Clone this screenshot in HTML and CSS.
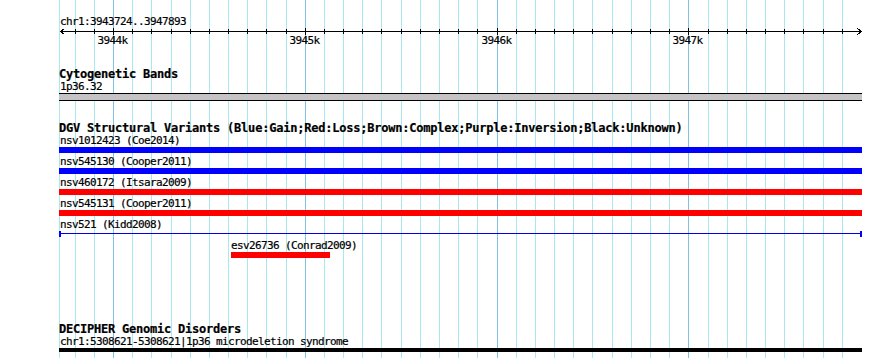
FILE: index.html
```html
<!DOCTYPE html>
<html>
<head>
<meta charset="utf-8">
<title>Genome browser tracks</title>
<link rel="stylesheet" href="styles.css">
</head>
<body>
<div class="panel">
  <svg class="grid" width="890" height="358" viewBox="0 0 890 358" shape-rendering="crispEdges">
    <g class="minor">
      <rect x="59" y="0" width="1" height="358"/>
      <rect x="75" y="0" width="1" height="358"/>
      <rect x="94" y="0" width="1" height="358"/>
      <rect x="132" y="0" width="1" height="358"/>
      <rect x="151" y="0" width="1" height="358"/>
      <rect x="171" y="0" width="1" height="358"/>
      <rect x="190" y="0" width="1" height="358"/>
      <rect x="209" y="0" width="1" height="358"/>
      <rect x="228" y="0" width="1" height="358"/>
      <rect x="247" y="0" width="1" height="358"/>
      <rect x="266" y="0" width="1" height="358"/>
      <rect x="286" y="0" width="1" height="358"/>
      <rect x="324" y="0" width="1" height="358"/>
      <rect x="343" y="0" width="1" height="358"/>
      <rect x="362" y="0" width="1" height="358"/>
      <rect x="381" y="0" width="1" height="358"/>
      <rect x="401" y="0" width="1" height="358"/>
      <rect x="420" y="0" width="1" height="358"/>
      <rect x="439" y="0" width="1" height="358"/>
      <rect x="458" y="0" width="1" height="358"/>
      <rect x="477" y="0" width="1" height="358"/>
      <rect x="516" y="0" width="1" height="358"/>
      <rect x="535" y="0" width="1" height="358"/>
      <rect x="554" y="0" width="1" height="358"/>
      <rect x="573" y="0" width="1" height="358"/>
      <rect x="592" y="0" width="1" height="358"/>
      <rect x="612" y="0" width="1" height="358"/>
      <rect x="631" y="0" width="1" height="358"/>
      <rect x="650" y="0" width="1" height="358"/>
      <rect x="669" y="0" width="1" height="358"/>
      <rect x="708" y="0" width="1" height="358"/>
      <rect x="727" y="0" width="1" height="358"/>
      <rect x="746" y="0" width="1" height="358"/>
      <rect x="765" y="0" width="1" height="358"/>
      <rect x="784" y="0" width="1" height="358"/>
      <rect x="803" y="0" width="1" height="358"/>
      <rect x="823" y="0" width="1" height="358"/>
      <rect x="842" y="0" width="1" height="358"/>
    </g>
    <g class="major">
      <rect x="113" y="0" width="1" height="358"/>
      <rect x="305" y="0" width="1" height="358"/>
      <rect x="497" y="0" width="1" height="358"/>
      <rect x="688" y="0" width="1" height="358"/>
    </g>
  </svg>

  <div class="track track-ruler">
    <div class="label">chr1:3943724..3947893</div>
    <svg class="ruler" width="890" height="20" viewBox="0 0 890 20" shape-rendering="crispEdges">
      <g class="ink">
        <rect x="60" y="3" width="802" height="1"/>
        <rect x="75" y="1" width="1" height="5"/>
        <rect x="94" y="1" width="1" height="5"/>
        <rect x="113" y="0" width="1" height="7"/>
        <rect x="132" y="1" width="1" height="5"/>
        <rect x="151" y="1" width="1" height="5"/>
        <rect x="171" y="1" width="1" height="5"/>
        <rect x="190" y="1" width="1" height="5"/>
        <rect x="209" y="1" width="1" height="5"/>
        <rect x="228" y="1" width="1" height="5"/>
        <rect x="247" y="1" width="1" height="5"/>
        <rect x="266" y="1" width="1" height="5"/>
        <rect x="286" y="1" width="1" height="5"/>
        <rect x="305" y="0" width="1" height="7"/>
        <rect x="324" y="1" width="1" height="5"/>
        <rect x="343" y="1" width="1" height="5"/>
        <rect x="362" y="1" width="1" height="5"/>
        <rect x="381" y="1" width="1" height="5"/>
        <rect x="401" y="1" width="1" height="5"/>
        <rect x="420" y="1" width="1" height="5"/>
        <rect x="439" y="1" width="1" height="5"/>
        <rect x="458" y="1" width="1" height="5"/>
        <rect x="477" y="1" width="1" height="5"/>
        <rect x="497" y="0" width="1" height="7"/>
        <rect x="516" y="1" width="1" height="5"/>
        <rect x="535" y="1" width="1" height="5"/>
        <rect x="554" y="1" width="1" height="5"/>
        <rect x="573" y="1" width="1" height="5"/>
        <rect x="592" y="1" width="1" height="5"/>
        <rect x="612" y="1" width="1" height="5"/>
        <rect x="631" y="1" width="1" height="5"/>
        <rect x="650" y="1" width="1" height="5"/>
        <rect x="669" y="1" width="1" height="5"/>
        <rect x="688" y="0" width="1" height="7"/>
        <rect x="708" y="1" width="1" height="5"/>
        <rect x="727" y="1" width="1" height="5"/>
        <rect x="746" y="1" width="1" height="5"/>
        <rect x="765" y="1" width="1" height="5"/>
        <rect x="784" y="1" width="1" height="5"/>
        <rect x="803" y="1" width="1" height="5"/>
        <rect x="823" y="1" width="1" height="5"/>
        <rect x="842" y="1" width="1" height="5"/>
      </g>
      <path class="arrow" d="M64.5 0.5 L60.5 3.5 L64.5 6.5"/>
      <path class="arrow" d="M857.5 0.5 L861.5 3.5 L857.5 6.5"/>
      <g class="ticklabels">
        <text x="112.5" y="16">3944k</text>
        <text x="304.5" y="16">3945k</text>
        <text x="496.5" y="16">3946k</text>
        <text x="687.5" y="16">3947k</text>
      </g>
    </svg>
  </div>

  <section class="track track-cyto">
    <div class="title">Cytogenetic Bands</div>
    <div class="label">1p36.32</div>
    <div class="band"></div>
  </section>

  <section class="track track-dgv">
    <div class="title">DGV Structural Variants (Blue:Gain;Red:Loss;Brown:Complex;Purple:Inversion;Black:Unknown)</div>
    <div class="feature">
      <div class="label">nsv1012423 (Coe2014)</div>
      <div class="bar gain"></div>
    </div>
    <div class="feature">
      <div class="label">nsv545130 (Cooper2011)</div>
      <div class="bar gain"></div>
    </div>
    <div class="feature">
      <div class="label">nsv460172 (Itsara2009)</div>
      <div class="bar loss"></div>
    </div>
    <div class="feature">
      <div class="label">nsv545131 (Cooper2011)</div>
      <div class="bar loss"></div>
    </div>
    <div class="feature">
      <div class="label">nsv521 (Kidd2008)</div>
      <div class="interval"></div>
    </div>
    <div class="feature">
      <div class="label" style="padding-left:231px">esv26736 (Conrad2009)</div>
      <div class="bar loss" style="margin-left:231px;width:99px"></div>
    </div>
  </section>

  <section class="track track-decipher">
    <div class="title">DECIPHER Genomic Disorders</div>
    <div class="label">chr1:5308621-5308621|1p36 microdeletion syndrome</div>
    <div class="bar disorder"></div>
  </section>
</div>
</body>
</html>
```

FILE: styles.css
```css
html, body {
  margin: 0;
  padding: 0;
  background: #ffffff;
}

.panel {
  position: relative;
  z-index: 0;
  width: 890px;
  height: 358px;
  overflow: hidden;
  box-sizing: border-box;
  padding-top: 15px;
  font-family: "DejaVu Sans Mono", "Liberation Mono", monospace;
  color: #000000;
}

.grid {
  position: absolute;
  left: 0;
  top: 0;
  z-index: -1;
  display: block;
}

.grid .minor rect {
  fill: #a8e8ee;
}

.grid .major rect {
  fill: #80c2e4;
}

.label {
  height: 13px;
  line-height: 14px;
  font-size: 11px;
  letter-spacing: -0.62px;
  padding-left: 60px;
  white-space: nowrap;
  -webkit-text-stroke: 0.2px #000000;
}

.title {
  height: 12px;
  line-height: 13px;
  font-size: 12px;
  font-weight: bold;
  letter-spacing: -0.22px;
  padding-left: 59px;
  white-space: nowrap;
  -webkit-text-stroke: 0.2px #000000;
}

.ruler {
  display: block;
}

.ruler .ink rect {
  fill: #000000;
}

.ruler .arrow {
  fill: none;
  stroke: #000000;
  stroke-width: 1;
}

.ticklabels text {
  font-family: "DejaVu Sans Mono", "Liberation Mono", monospace;
  font-size: 11px;
  letter-spacing: -0.62px;
  text-anchor: middle;
  fill: #000000;
  stroke: #000000;
  stroke-width: 0.2px;
}

.track-cyto {
  margin-top: 20px;
}

.band {
  margin-left: 59px;
  width: 803px;
  height: 6px;
  border-top: 1px solid #000000;
  border-bottom: 1px solid #000000;
  background: #c6c3c6;
}

.track-dgv {
  margin-top: 21px;
}

.feature {
  margin-bottom: 2px;
}

.bar {
  margin-left: 59px;
  width: 803px;
  height: 6px;
}

.bar.gain {
  background: #0000ff;
}

.bar.loss {
  background: #ff0000;
}

.interval {
  margin-left: 59px;
  width: 803px;
  height: 6px;
  box-sizing: border-box;
  border-left: 2px solid #0000ff;
  border-right: 2px solid #0000ff;
  background: linear-gradient(#0000e8, #0000e8) 0 2px / 100% 1px no-repeat;
}

.track-decipher {
  margin-top: 65px;
}

.bar.disorder {
  height: 4px;
  background: #000000;
}
```
